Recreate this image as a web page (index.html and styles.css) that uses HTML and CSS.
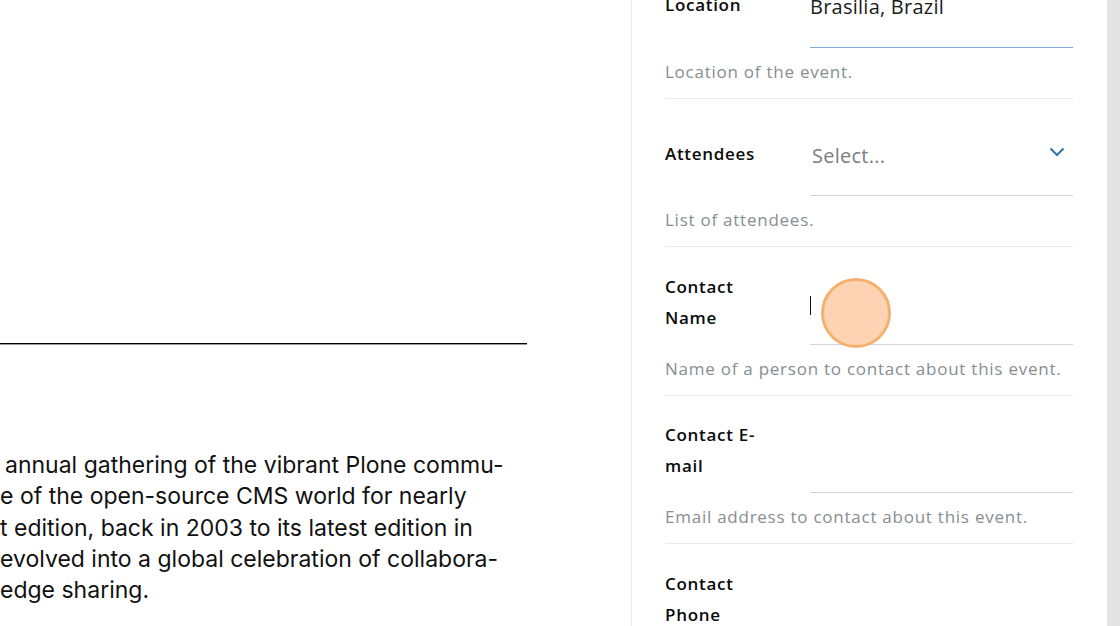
FILE: index.html
```html
<!DOCTYPE html>
<html lang="en">
<head>
<meta charset="utf-8">
<title>Event edit</title>
<link rel="stylesheet" href="styles.css">
</head>
<body>
<div class="page">
  <main class="main">
    <div class="hero"></div>
    <div class="rule"></div>
    <div class="description">
      <div class="line line-first">annual gathering of the vibrant Plone commu-</div>
      <div class="line">e of the open-source CMS world for nearly</div>
      <div class="line">t edition, back in 2003 to its latest edition in</div>
      <div class="line">evolved into a global celebration of collabora-</div>
      <div class="line">edge sharing.</div>
    </div>
  </main>
  <aside class="sidebar">
    <form class="form">
      <div class="field">
        <div class="row">
          <label class="label">Location</label>
          <div class="input input-focus"><span class="value">Brasilia, Brazil</span></div>
        </div>
        <div class="help">Location of the event.</div>
      </div>
      <div class="field">
        <div class="row">
          <label class="label">Attendees</label>
          <div class="input input-select">
            <span class="placeholder">Select...</span>
            <svg class="chevron" width="16" height="10" viewBox="0 0 16 10"><polyline points="1.5,1.5 8,8 14.5,1.5" fill="none" stroke="#2f72b3" stroke-width="2"/></svg>
          </div>
        </div>
        <div class="help">List of attendees.</div>
      </div>
      <div class="field">
        <div class="row">
          <label class="label">Contact Name</label>
          <div class="input"><span class="caret"></span></div>
        </div>
        <div class="help">Name of a person to contact about this event.</div>
      </div>
      <div class="field">
        <div class="row">
          <label class="label">Contact E-mail</label>
          <div class="input"></div>
        </div>
        <div class="help">Email address to contact about this event.</div>
      </div>
      <div class="field">
        <div class="row">
          <label class="label">Contact Phone</label>
          <div class="input"></div>
        </div>
      </div>
    </form>
    <div class="click-dot"></div>
  </aside>
  <div class="scrollbar"></div>
</div>
</body>
</html>
```

FILE: styles.css
```css
html, body {
  margin: 0;
  padding: 0;
  background: #fff;
}

.page {
  display: flex;
  width: 1120px;
  height: 626px;
  overflow: hidden;
}

.main {
  width: 631px;
  flex: none;
  display: flex;
  flex-direction: column;
  overflow: hidden;
}

.hero {
  height: 343px;
  flex: none;
}

.rule {
  width: 527px;
  height: 0;
  border-top: 1px solid #000;
  border-bottom: 1px solid #9a9a9a;
}

.description {
  margin-top: 105px;
  font-family: Inter, "Liberation Sans", sans-serif;
  font-size: 23px;
  line-height: 31.3px;
  color: #111;
}

.line {
  white-space: nowrap;
}

.line-first {
  padding-left: 5px;
}

.sidebar {
  position: relative;
  flex: none;
  border-left: 1px solid #ededed;
  padding: 0 34px 0 33px;
  box-sizing: content-box;
  width: 408px;
  font-family: "Open Sans", sans-serif;
  overflow: hidden;
}

.form {
  margin-top: -50px;
}

.field {
  padding-top: 13.5px;
  border-bottom: 1px solid #ebebeb;
}

.row {
  display: grid;
  grid-template-columns: 145px 1fr;
  align-items: center;
  height: 84px;
}

.label {
  font-size: 17px;
  font-weight: 600;
  line-height: 31px;
  color: #0a0a0a;
  width: 112px;
  letter-spacing: 0.7px;
  margin-top: -2px;
}

.input {
  height: 84px;
  box-sizing: border-box;
  border-bottom: 1px solid #cfd5d8;
  display: flex;
  align-items: center;
  padding-top: 3px;
  position: relative;
}

.input-focus {
  border-bottom-color: #7fa9d0;
}

.value {
  font-size: 20px;
  letter-spacing: 0.25px;
  color: #1b1b1b;
}

.placeholder {
  font-size: 20px;
  letter-spacing: 0.25px;
  color: #7d7d7d;
  padding-left: 2px;
}

.input-select {
  justify-content: space-between;
}

.chevron {
  margin-right: 8px;
  margin-top: -6px;
}

.caret {
  display: block;
  width: 1px;
  height: 19px;
  margin-top: 4px;
  background: #111;
}

.help {
  padding: 13px 0 15px;
  line-height: 22px;
  font-size: 17px;
  letter-spacing: 0.75px;
  color: #868e92;
  white-space: nowrap;
}

.click-dot {
  position: absolute;
  left: 189px;
  top: 278px;
  width: 64px;
  height: 64px;
  border-radius: 50%;
  background: #fdd3b4;
  border: 3px solid #f6b06e;
}

.scrollbar {
  flex: 1;
  background: #e4e4e4;
}
```
